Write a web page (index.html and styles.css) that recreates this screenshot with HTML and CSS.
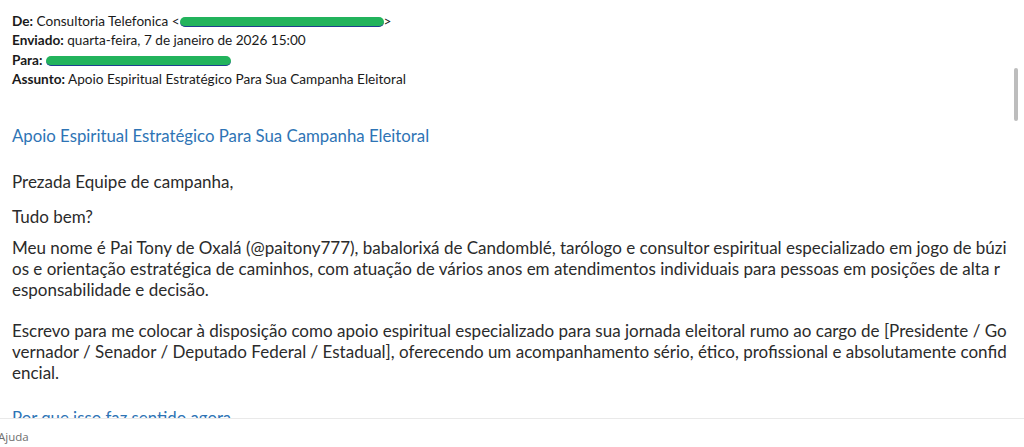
FILE: index.html
```html
<!DOCTYPE html>
<html lang="pt-BR">
<head>
  <meta charset="UTF-8" />
  <title>Apoio Espiritual Estratégico Para Sua Campanha Eleitoral</title>
  <link rel="stylesheet" href="styles.css">
</head>
<body>

<div class="reader">
  <!-- Message headers -->
  <div class="headers">
    <div><b>De:</b> Consultoria Telefonica &lt;<span class="hidden-mail wide"></span>&gt;</div>
    <div><b>Enviado:</b> quarta-feira, 7 de janeiro de 2026 15:00</div>
    <div><b>Para:</b> <span class="hidden-mail"></span></div>
    <div><b>Assunto:</b> Apoio Espiritual Estratégico Para Sua Campanha Eleitoral</div>
  </div>

  <!-- Message body -->
  <div class="message">
    <h2 class="title">Apoio Espiritual Estratégico Para Sua Campanha Eleitoral</h2>
    <p class="p-greet">Prezada Equipe de campanha,</p>
    <p class="p-short">Tudo bem?</p>
    <p>Meu nome é Pai Tony de Oxalá (@paitony777), babalorixá de Candomblé, tarólogo e consultor espiritual especializado em jogo de búzi<br>os e orientação estratégica de caminhos, com atuação de vários anos em atendimentos individuais para pessoas em posições de alta r<br>esponsabilidade e decisão.</p>
    <p>Escrevo para me colocar à disposição como apoio espiritual especializado para sua jornada eleitoral rumo ao cargo de [Presidente / Go<br>vernador / Senador / Deputado Federal / Estadual], oferecendo um acompanhamento sério, ético, profissional e absolutamente confid<br>encial.</p>
    <h3 class="subtitle">Por que isso faz sentido agora</h3>
  </div>

  <div class="scrollbar"></div>
</div>

<footer class="statusbar">
  <span>Ajuda</span>
</footer>

</body>
</html>
```

FILE: styles.css
```css
/* Base */
body {
  margin: 0;
  background: #fff;
  font-family: Lato, "Open Sans", sans-serif;
  color: #2b2b2b;
  height: 447px;
  overflow: hidden;
}

.reader {
  position: relative;
  height: 418px;
  overflow: hidden;
  padding-left: 12px;
}

/* Headers */
.headers {
  padding-top: 12px;
  font-size: 13.6px;
  line-height: 19.4px;
  color: #1a1a1a;
}

.headers b {
  font-weight: 700;
}

.hidden-mail {
  display: inline-block;
  width: 185px;
  height: 9px;
  background: #22b35c;
  border-radius: 5px;
  border-bottom: 1px solid #1f3f8f;
  vertical-align: -1px;
}

.hidden-mail.wide {
  width: 204px;
}

/* Body */
.message {
  font-size: 17px;
  line-height: 21px;
  white-space: nowrap;
}

.title,
.subtitle {
  margin: 0;
  font-size: 16.8px;
  font-weight: 400;
  color: #2e74b5;
}

.title {
  margin-top: 35px;
  margin-bottom: 25px;
}

.message p {
  margin: 0 0 20px;
}

.message .p-greet {
  margin-bottom: 14px;
}

.message .p-short {
  margin-bottom: 10px;
}

.subtitle {
  margin-top: 24px;
}

/* Scroll thumb drawn over the content */
.scrollbar {
  position: absolute;
  right: 6px;
  top: 68px;
  width: 4px;
  height: 53px;
  border-radius: 2px;
  background: #bdbdbd;
}

/* Bottom bar */
.statusbar {
  border-top: 1px solid #e9e9e9;
  height: 29px;
  display: flex;
  align-items: center;
  padding-top: 6px;
  box-sizing: border-box;
  font-family: "Open Sans", sans-serif;
  font-size: 11.5px;
  color: #6e6e6e;
}

.statusbar span {
  margin-left: -2px;
}
```
